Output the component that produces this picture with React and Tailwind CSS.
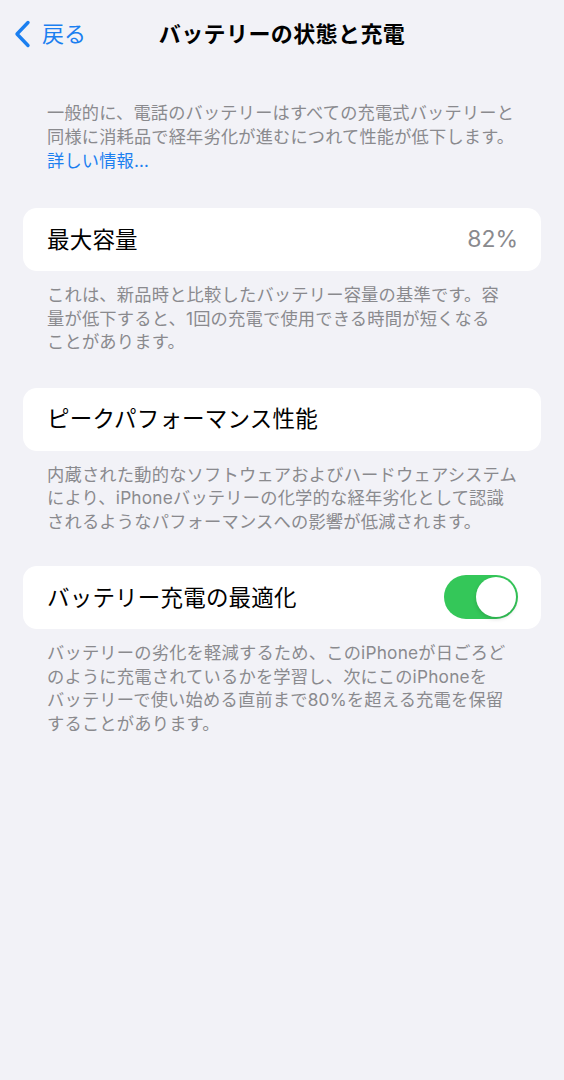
import React, { useState } from 'react';

const font = { fontFamily: 'Inter, "Noto Sans CJK JP", sans-serif' };

const Footer = ({ lines }) => (
    <div className='px-[47px] pt-[12px] text-[17.25px] tracking-[0.2px] leading-[23.5px] text-[#8a8a8e]'>
        {lines.map((line, i) => (
            <span key={i} className='block whitespace-nowrap'>{line}</span>
        ))}
    </div>
);

const Card = ({ children }) => (
    <div className='mx-[23px] h-[63px] rounded-[14px] bg-white flex items-center justify-between pl-[24px] pr-[23px]'>
        {children}
    </div>
);

const App = () => {
    const [optimized, setOptimized] = useState(true);

    return (
        <div style={font} className='min-h-screen w-full bg-[#f2f2f7] text-black'>
            {/* nav bar */}
            <div className='relative h-[70px] flex items-center justify-center'>
                <button className='absolute left-[12px] top-[20px] flex items-center gap-[10px] text-[#1b7ff0]'>
                    <svg width="20" height="28" viewBox="0 0 20 28" fill="none">
                        <path d="M16 2.5 L5 14 L16 25.5" stroke="currentColor" strokeWidth="3.4" strokeLinecap="round" strokeLinejoin="round" />
                    </svg>
                    <span className='text-[22px] leading-[28px]'>戻る</span>
                </button>
                <h1 className='text-[22px] font-bold tracking-[0.4px] -mt-[2px]'>バッテリーの状態と充電</h1>
            </div>

            {/* intro */}
            <div className='px-[47px] pt-[31px] text-[17.2px] tracking-[0.2px] leading-[24px] text-[#8a8a8e]'>
                <span className='block whitespace-nowrap'>一般的に、電話のバッテリーはすべての充電式バッテリーと</span>
                <span className='block whitespace-nowrap'>同様に消耗品で経年劣化が進むにつれて性能が低下します。</span>
                <a className='block text-[#1b7ff0]'>詳しい情報…</a>
            </div>

            <div className='pt-[35px]'>
                <Card>
                    <span className='text-[22.5px] tracking-[0.2px]'>最大容量</span>
                    <span className='text-[23px] text-[#8a8a8e]'>82%</span>
                </Card>
                <Footer lines={[
                    'これは、新品時と比較したバッテリー容量の基準です。容',
                    '量が低下すると、1回の充電で使用できる時間が短くなる',
                    'ことがあります。',
                ]} />
            </div>

            <div className='pt-[34px]'>
                <Card>
                    <span className='text-[22.5px] tracking-[0.2px]'>ピークパフォーマンス性能</span>
                </Card>
                <Footer lines={[
                    '内蔵された動的なソフトウェアおよびハードウェアシステム',
                    'により、iPhoneバッテリーの化学的な経年劣化として認識',
                    'されるようなパフォーマンスへの影響が低減されます。',
                ]} />
            </div>

            <div className='pt-[33px]'>
                <Card>
                    <span className='text-[22.5px] tracking-[0.2px]'>バッテリー充電の最適化</span>
                    <button
                        onClick={() => setOptimized(v => !v)}
                        className={`w-[74px] h-[44px] -mt-[2px] rounded-full p-[2px] flex ${optimized ? 'bg-[#34c759] justify-end' : 'bg-[#e5e5ea] justify-start'}`}
                    >
                        <span className='w-[40px] h-[40px] rounded-full bg-white shadow-[0_2px_4px_rgba(0,0,0,0.15)]' />
                    </button>
                </Card>
                <Footer lines={[
                    'バッテリーの劣化を軽減するため、このiPhoneが日ごろど',
                    'のように充電されているかを学習し、次にこのiPhoneを',
                    'バッテリーで使い始める直前まで80%を超える充電を保留',
                    'することがあります。',
                ]} />
            </div>
        </div>
    );
};

export default App;
